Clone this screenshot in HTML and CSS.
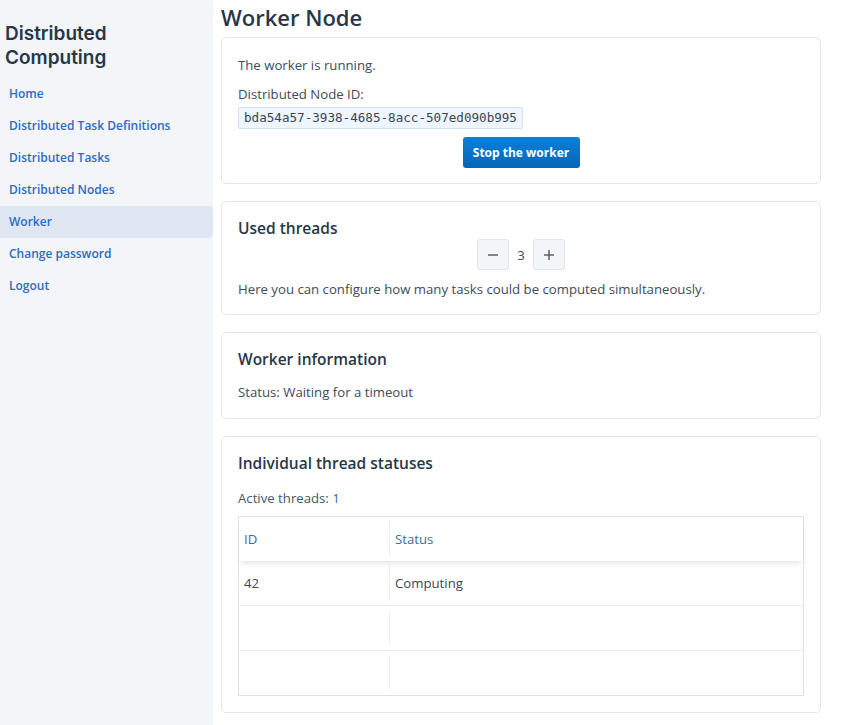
FILE: index.html
```html
<!DOCTYPE html>
<html>
<head>
<meta charset="utf-8">
<link rel="stylesheet" href="styles.css">
</head>
<body>
<div class="app">
  <aside class="sidebar">
    <h2 class="brand"><span class="brand-line">Distributed</span><span class="brand-line">Computing</span></h2>
    <nav class="nav">
      <a class="nav-item">Home</a>
      <a class="nav-item">Distributed Task Definitions</a>
      <a class="nav-item">Distributed Tasks</a>
      <a class="nav-item">Distributed Nodes</a>
      <a class="nav-item active">Worker</a>
      <a class="nav-item">Change password</a>
      <a class="nav-item">Logout</a>
    </nav>
  </aside>
  <main class="main">
    <h1 class="page-title">Worker Node</h1>
    <section class="card card-status">
      <p class="text">The worker is running.</p>
      <p class="text label">Distributed Node ID:</p>
      <code class="node-id">bda54a57-3938-4685-8acc-507ed090b995</code>
      <div class="center">
        <button class="btn-primary">Stop the worker</button>
      </div>
    </section>
    <section class="card card-threads">
      <h3 class="card-title">Used threads</h3>
      <div class="stepper">
        <button class="step-btn"><svg width="12" height="12" viewBox="0 0 12 12"><path d="M1 6h10" stroke="#56606c" stroke-width="1.5"/></svg></button>
        <span class="step-val">3</span>
        <button class="step-btn"><svg width="12" height="12" viewBox="0 0 12 12"><path d="M1 6h10M6 1v10" stroke="#56606c" stroke-width="1.5"/></svg></button>
      </div>
      <p class="text">Here you can configure how many tasks could be computed simultaneously.</p>
    </section>
    <section class="card card-info">
      <h3 class="card-title">Worker information</h3>
      <p class="text">Status: Waiting for a timeout</p>
    </section>
    <section class="card card-table">
      <h3 class="card-title">Individual thread statuses</h3>
      <p class="text active-threads">Active threads: <span class="count">1</span></p>
      <div class="grid">
        <div class="grid-row head">
          <div class="cell">ID</div>
          <div class="cell">Status</div>
        </div>
        <div class="grid-row">
          <div class="cell">42</div>
          <div class="cell">Computing</div>
        </div>
        <div class="grid-row">
          <div class="cell"></div>
          <div class="cell"></div>
        </div>
        <div class="grid-row last">
          <div class="cell"></div>
          <div class="cell"></div>
        </div>
      </div>
    </section>
  </main>
</div>
</body>
</html>
```
FILE: styles.css
```css
* { box-sizing: border-box; }
html, body { margin: 0; padding: 0; }
body {
  font-family: "Open Sans", "Noto Sans", sans-serif;
  color: #404b59;
  background: #fff;
}
.app {
  display: flex;
  min-height: 725px;
}
.sidebar {
  width: 213px;
  flex: none;
  background: #f3f5f8;
  padding-top: 22px;
}
.brand {
  margin: 0 0 8px 5px;
  font-family: "Inter", "Open Sans", sans-serif;
  font-weight: 600;
  color: #283747;
}
.brand-line {
  display: block;
  height: 24px;
  line-height: 24px;
  font-size: 19px;
}
.nav { display: flex; flex-direction: column; }
.nav-item {
  display: block;
  height: 32px;
  line-height: 32px;
  padding-left: 9px;
  font-size: 12px;
  font-weight: 600;
  color: #2f6ac4;
  border-radius: 0 4px 4px 0;
}
.nav-item.active { background: #dfe8f2; }
.main {
  flex: 1;
  padding: 0 39px 0 8px;
  display: flex;
  flex-direction: column;
  gap: 17px;
}
.page-title {
  margin: 3px 0 -11px 0;
  font-size: 22px;
  line-height: 28px;
  font-weight: 600;
  color: #283747;
}
.card {
  border: 1px solid #e5e5ea;
  border-radius: 5px;
  padding: 16px 16px;
}
.text {
  margin: 0;
  font-size: 13.2px;
  line-height: 20px;
}
.card-status { padding-top: 17px; padding-bottom: 16px; height: 147px; }
.label { margin-top: 9px; }
.node-id {
  display: inline-block;
  margin-top: 3px;
  font-family: "DejaVu Sans Mono", monospace;
  font-size: 12.6px;
  line-height: 20px;
  padding: 0 5px;
  background: #eef5fc;
  border: 1px solid #cfe2f6;
  border-radius: 2px;
  color: #3c4756;
}
.center { display: flex; justify-content: center; margin-top: 8px; }
.btn-primary {
  width: 117px;
  height: 31px;
  border: none;
  border-radius: 3px;
  background: linear-gradient(#0a80d9, #0666b8);
  color: #fff;
  font-family: inherit;
  font-size: 12px;
  font-weight: 700;
}
.card-title {
  margin: 0;
  font-size: 15.5px;
  line-height: 22px;
  font-weight: 600;
  color: #283747;
}
.card-threads { padding-top: 15px; height: 114px; }
.stepper {
  display: flex;
  justify-content: center;
  align-items: center;
}
.step-btn {
  width: 32px;
  height: 31px;
  border: 1px solid #e2e4e8;
  border-radius: 3px;
  background: #f4f5f7;
  display: flex;
  align-items: center;
  justify-content: center;
  padding: 0;
}
.step-val {
  width: 24px;
  text-align: center;
  font-size: 13.2px;
  color: #404b59;
}
.card-threads .text { margin-top: 9px; }
.card-info { padding-top: 15px; height: 87px; }
.card-info .text { margin-top: 12px; }
.card-table { padding-top: 15px; padding-bottom: 16px; height: 277px; }
.active-threads { margin-top: 14px; color: #46566a; }
.count { color: #2f6ac4; }
.grid {
  margin-top: 8px;
  border: 1px solid #e2e2e6;
}
.grid-row {
  display: grid;
  grid-template-columns: 150px 1fr;
  height: 45px;
  border-bottom: 1px solid #ececef;
  align-items: center;
}
.grid-row.last { border-bottom: none; height: 44px; }
.grid-row.head {
  height: 44px;
  border-bottom: none;
  box-shadow: 0 4px 6px -2px rgba(0,0,0,0.12);
  position: relative;
  z-index: 1;
}
.cell {
  font-size: 13.2px;
  padding-left: 5px;
  height: 36px;
  line-height: 36px;
  color: #3a4654;
}
.cell + .cell { border-left: 1px solid #f1f1f3; }
.head .cell { color: #3d6aa0; }
```
